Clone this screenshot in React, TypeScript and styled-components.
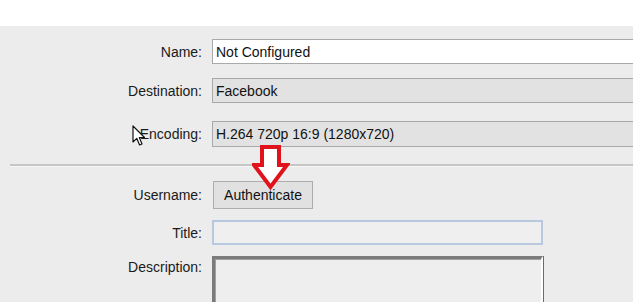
import styled, { createGlobalStyle } from "styled-components";

const Global = createGlobalStyle`
  html, body { margin: 0; padding: 0; background: #fff; overflow: hidden; }
  body { font-family: "Liberation Sans", Arial, sans-serif; }
`

const TopBand = styled.div`
  height: 26px;
  background: #fff;
`

const Panel = styled.div`
  background: #ececec;
  height: 276px;
  padding-top: 13px;
  box-sizing: border-box;
  position: relative;
`

const Form = styled.div`
  display: grid;
  grid-template-columns: 202px 1fr;
  column-gap: 10px;
  align-items: center;
`

const Label = styled.div<{ $top?: boolean }>`
  text-align: right;
  font-size: 14px;
  color: #1a1a1a;
  align-self: ${p => (p.$top ? "start" : "center")};
  padding-top: ${p => (p.$top ? "3px" : "0")};
`

const Field = styled.div<{ $variant: "white" | "gray" }>`
  width: 440px;
  height: 25px;
  box-sizing: border-box;
  border: 1px solid #a9a9a9;
  background: ${p => (p.$variant === "white" ? "#fff" : "#e2e2e2")};
  font-size: 14px;
  color: #111;
  display: flex;
  align-items: center;
  padding-left: 3px;
  white-space: nowrap;
`

const Divider = styled.div`
  grid-column: 1 / -1;
  margin: 17px 0 14px 10px;
  height: 2px;
  background: #c6c6c6;
  border-bottom: 1px solid #f6f6f6;
`

const Spacer = styled.div<{ $h: number }>`
  grid-column: 1 / -1;
  height: ${p => p.$h}px;
`

const ButtonCell = styled.div`
  position: relative;
`

const Button = styled.button`
  width: 100px;
  height: 28px;
  margin-left: 1px;
  border: 1px solid #adadad;
  background: #e1e1e1;
  font-family: "Liberation Sans", Arial, sans-serif;
  font-size: 14px;
  color: #111;
  padding: 0;
`

const Arrow = styled.svg`
  position: absolute;
  left: 40px;
  top: -36px;
`

const TitleInput = styled.div`
  width: 331px;
  height: 25px;
  box-sizing: border-box;
  border: 2px solid #b8c8de;
  background: #efefef;
`

const TextArea = styled.div`
  width: 331px;
  height: 60px;
  box-sizing: border-box;
  border-top: 3px solid #7b7b7b;
  border-left: 3px solid #7b7b7b;
  border-right: 2px solid #fff;
  box-shadow: inset 1px 1px 0 #a0a0a0, 1px 0 0 #6a6a6a;
  background: #eeeeee;
`

const Cursor = styled.svg`
  position: absolute;
  left: 132px;
  top: 99px;
`

export default function App() {
  return (
    <>
      <Global />
      <TopBand />
      <Panel>
        <Form>
          <Label>Name:</Label>
          <Field $variant="white">Not Configured</Field>
          <Spacer $h={14} />
          <Label>Destination:</Label>
          <Field $variant="gray">Facebook</Field>
          <Spacer $h={18} />
          <Label>Encoding:</Label>
          <Field $variant="gray" style={{ height: 26 }}>H.264 720p 16:9 (1280x720)</Field>
          <Divider />
          <Label>Username:</Label>
          <ButtonCell>
            <Button>Authenticate</Button>
            <Arrow width="38" height="46" viewBox="0 0 38 46">
              <path
                d="M10 2 H27 V20 H35 L18.5 42 L2 20 H10 Z"
                fill="#fff"
                stroke="#e0121b"
                strokeWidth="4"
                strokeLinejoin="miter"
              />
            </Arrow>
          </ButtonCell>
          <Spacer $h={11} />
          <Label>Title:</Label>
          <TitleInput />
          <Spacer $h={11} />
          <Label $top>Description:</Label>
          <TextArea />
        </Form>
        <Cursor width="14" height="22" viewBox="0 0 14 22">
          <path
            d="M1 1 V17 L4.8 13.4 L7.6 20 L10 19 L7.3 12.5 L12.5 12.5 Z"
            fill="#fff"
            stroke="#111"
            strokeWidth="1.2"
            strokeLinejoin="round"
          />
        </Cursor>
      </Panel>
    </>
  )
}
